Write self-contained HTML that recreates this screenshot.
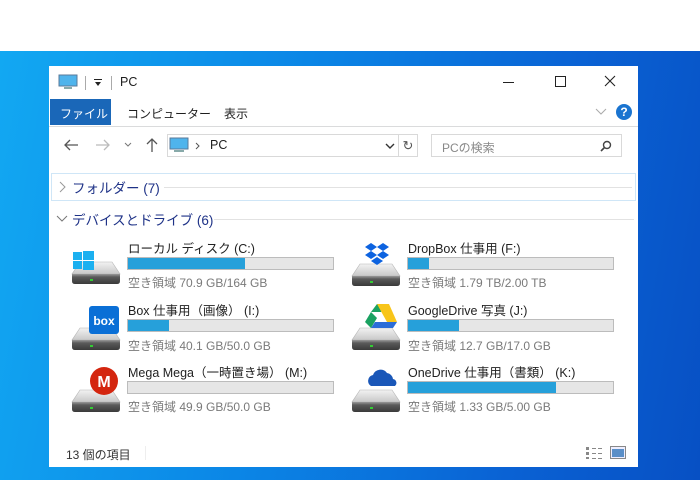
<!DOCTYPE html>
<html><head><meta charset="utf-8"><style>
*{margin:0;padding:0;box-sizing:border-box}
body{width:700px;height:480px;overflow:hidden;position:relative;background:#fff;font-family:"Liberation Sans","Noto Sans CJK JP",sans-serif;font-size:12px;color:#1e1e1e}
.desk{position:absolute;left:0;top:51px;width:700px;height:429px;background:linear-gradient(100deg,#12a8f2 0%,#0b86e6 40%,#0a62d4 75%,#0750c4 100%)}
.win{position:absolute;left:49px;top:66px;width:589px;height:401px;background:#fff}
.a{position:absolute;white-space:nowrap}
.bar{position:absolute;height:13px;width:207px;background:#e6e6e6;border:1px solid #bcbcbc}
.bar i{display:block;height:100%;background:#26a0da}
.nm{font-size:12.5px;color:#222}
.fr{font-size:12px;color:#7a7a7a}
</style></head><body>
<div class="desk"></div>
<div class="win">
 <svg class="a" style="left:9px;top:8px" width="20" height="16"><rect x="1" y="1" width="18" height="11" fill="#4fb4ec" stroke="#5a7a9a"/><rect x="6" y="13" width="8" height="2" fill="#8aa"/></svg>
 <div class="a" style="left:36px;top:10px;width:1px;height:14px;background:#aaa"></div>
 <svg class="a" style="left:44px;top:12px" width="10" height="10"><rect x="1" y="1" width="8" height="1" fill="#222"/><path d="M2 4h6l-3 4z" fill="#222"/></svg>
 <div class="a" style="left:62px;top:10px;width:1px;height:14px;background:#aaa"></div>
 <div class="a" style="left:71px;top:9px;font-size:12.5px">PC</div>
 <div class="a" style="left:454px;top:16px;width:11px;height:1px;background:#222"></div>
 <div class="a" style="left:506px;top:10px;width:11px;height:11px;border:1px solid #222"></div>
 <svg class="a" style="left:555px;top:9px" width="12" height="12"><path d="M1 1L11 11M11 1L1 11" stroke="#222" stroke-width="1.1"/></svg>
 <div class="a" style="left:1px;top:33px;width:61px;height:26px;background:#1a67b8;color:#fff;font-size:12px;padding:6px 0 0 10px">ファイル</div>
 <div class="a" style="left:78px;top:39px;font-size:12px">コンピューター</div>
 <div class="a" style="left:175px;top:39px;font-size:12px">表示</div>
 <svg class="a" style="left:546px;top:42px" width="12" height="8"><path d="M1 1l5 5 5-5" fill="none" stroke="#aaa"/></svg>
 <div class="a" style="left:567px;top:38px;width:16px;height:16px;border-radius:50%;background:#1a74d0;color:#fff;font-weight:bold;font-size:12px;text-align:center;line-height:16px">?</div>
 <div class="a" style="left:0;top:60px;width:589px;height:1px;background:#dadbdc"></div>
 <svg class="a" style="left:14px;top:72px" width="16" height="14"><path d="M15 7H2M7 2L2 7l5 5" fill="none" stroke="#555" stroke-width="1.3"/></svg>
 <svg class="a" style="left:46px;top:72px" width="16" height="14"><path d="M1 7h13M9 2l5 5-5 5" fill="none" stroke="#bbb" stroke-width="1.3"/></svg>
 <svg class="a" style="left:75px;top:76px" width="8" height="6"><path d="M1 1l3 3 3-3" fill="none" stroke="#777"/></svg>
 <svg class="a" style="left:96px;top:71px" width="14" height="16"><path d="M7 15V2M2 7l5-5 5 5" fill="none" stroke="#555" stroke-width="1.3"/></svg>
 <div class="a" style="left:118px;top:68px;width:251px;height:23px;border:1px solid #d9d9d9"></div>
 <svg class="a" style="left:120px;top:71px" width="20" height="17"><rect x="1" y="1" width="18" height="11" fill="#4fb4ec" stroke="#5a7a9a"/><rect x="5" y="13" width="10" height="2" fill="#8aa"/></svg>
 <svg class="a" style="left:146px;top:76px" width="6" height="8"><path d="M1 1l3 3-3 3" fill="none" stroke="#555"/></svg>
 <div class="a" style="left:161px;top:72px;font-size:12.5px">PC</div>
 <svg class="a" style="left:336px;top:77px" width="10" height="7"><path d="M1 1l4 4 4-4" fill="none" stroke="#333" stroke-width="1.4"/></svg>
 <div class="a" style="left:349px;top:68px;width:20px;height:23px;border:1px solid #d9d9d9;text-align:center;font-size:13px;color:#555;line-height:21px">&#8635;</div>
 <div class="a" style="left:382px;top:68px;width:191px;height:23px;border:1px solid #d9d9d9;color:#888;font-size:12px;padding:4px 0 0 10px">PCの検索</div>
 <svg class="a" style="left:551px;top:74px" width="12" height="12"><circle cx="7" cy="5" r="3.5" fill="none" stroke="#444" stroke-width="1.4"/><path d="M4.5 7.5L1 11" stroke="#444" stroke-width="1.6"/></svg>
 <div class="a" style="left:2px;top:107px;width:585px;height:28px;border:1px solid #cfe6f7"></div>
 <svg class="a" style="left:10px;top:115px" width="8" height="12"><path d="M1 1l5 5-5 5" fill="none" stroke="#999"/></svg>
 <div class="a" style="left:23px;top:111px;font-size:13.5px;color:#1e3287">フォルダー (7)</div>
 <div class="a" style="left:115px;top:121px;width:468px;height:1px;background:#e2e2e2"></div>
 <svg class="a" style="left:7px;top:149px" width="12" height="8"><path d="M1 1l5 5 5-5" fill="none" stroke="#777"/></svg>
 <div class="a" style="left:23px;top:143px;font-size:13.5px;color:#1e3287">デバイスとドライブ (6)</div>
 <div class="a" style="left:165px;top:153px;width:420px;height:1px;background:#e2e2e2"></div>

 <svg width="0" height="0" style="position:absolute"><defs>
  <linearGradient id="tp" x1="0" y1="0" x2="0" y2="1"><stop offset="0" stop-color="#f2f2f2"/><stop offset="1" stop-color="#c8c8c8"/></linearGradient>
  <linearGradient id="fr" x1="0" y1="0" x2="0" y2="1"><stop offset="0" stop-color="#9a9a9a"/><stop offset=".3" stop-color="#5a5a5a"/><stop offset="1" stop-color="#3a3a3a"/></linearGradient>
  <g id="drv"><path d="M8 12 L40 12 L48 24 L0 24Z" fill="url(#tp)" stroke="#b5b5b5" stroke-width=".6"/><path d="M0 24h48v7q0 3-3 3H3q-3 0-3-3z" fill="url(#fr)"/><rect x="18" y="29" width="3" height="2" fill="#3c3"/></g>
 </defs></svg>

 <svg class="a" style="left:22px;top:180px" width="50" height="40"><use href="#drv" x="1" y="4"/><g fill="#1bb0f0"><rect x="2" y="6" width="9" height="8"/><rect x="12" y="5" width="11" height="9"/><rect x="2" y="15" width="9" height="8"/><rect x="12" y="15" width="11" height="9"/></g></svg>
 <div class="a nm" style="left:79px;top:172px">ローカル ディスク (C:)</div>
 <div class="bar" style="left:78px;top:191px"><i style="width:57%"></i></div>
 <div class="a fr" style="left:79px;top:208px">空き領域 70.9 GB/164 GB</div>

 <svg class="a" style="left:22px;top:236px" width="50" height="50"><use href="#drv" x="1" y="14"/><rect x="18" y="4" width="30" height="28" rx="3" fill="#0a6fd6"/><text x="33" y="23" fill="#fff" font-family="Liberation Sans" font-weight="bold" font-size="12" text-anchor="middle">box</text></svg>
 <div class="a nm" style="left:79px;top:234px">Box 仕事用（画像） (I:)</div>
 <div class="bar" style="left:78px;top:253px"><i style="width:20%"></i></div>
 <div class="a fr" style="left:79px;top:271px">空き領域 40.1 GB/50.0 GB</div>

 <svg class="a" style="left:22px;top:298px" width="50" height="50"><use href="#drv" x="1" y="14"/><circle cx="33" cy="17" r="14" fill="#d4260f"/><text x="33" y="23" fill="#fff" font-family="Liberation Sans" font-weight="bold" font-size="16" text-anchor="middle">M</text></svg>
 <div class="a nm" style="left:79px;top:296px">Mega Mega（一時置き場） (M:)</div>
 <div class="bar" style="left:78px;top:315px"><i style="width:0"></i></div>
 <div class="a fr" style="left:79px;top:332px">空き領域 49.9 GB/50.0 GB</div>

 <svg class="a" style="left:302px;top:172px" width="50" height="50"><use href="#drv" x="1" y="14"/><g fill="#0d63e0"><path d="M20 5l6 4-6 4-6-4z"/><path d="M32 5l6 4-6 4-6-4z"/><path d="M20 13l6 4-6 4-6-4z"/><path d="M32 13l6 4-6 4-6-4z"/><path d="M26 19l6 4-6 4-6-4z"/></g></svg>
 <div class="a nm" style="left:359px;top:172px">DropBox 仕事用 (F:)</div>
 <div class="bar" style="left:358px;top:191px"><i style="width:10%"></i></div>
 <div class="a fr" style="left:359px;top:208px">空き領域 1.79 TB/2.00 TB</div>

 <svg class="a" style="left:302px;top:236px" width="50" height="50"><use href="#drv" x="1" y="14"/><path d="M20 10l6-8 10 0-6 8z" fill="#1aa261"/><path d="M20 10l-6 10 6 6 6-10z" fill="#1aa261"/><path d="M26 2l12 0 8 18-10 0z" fill="#f8c51a"/><path d="M20 26l4-6 22 0-4 6z" fill="#2c6dd8"/></svg>
 <div class="a nm" style="left:359px;top:234px">GoogleDrive 写真 (J:)</div>
 <div class="bar" style="left:358px;top:253px"><i style="width:25%"></i></div>
 <div class="a fr" style="left:359px;top:271px">空き領域 12.7 GB/17.0 GB</div>

 <svg class="a" style="left:302px;top:298px" width="50" height="50"><use href="#drv" x="1" y="14"/><path d="M20 22a6 6 0 0 1 2-11a8 8 0 0 1 14-2a7 7 0 0 1 6 6a4 4 0 0 1 2 7z" fill="#1a57b8"/></svg>
 <div class="a nm" style="left:359px;top:296px">OneDrive 仕事用（書類） (K:)</div>
 <div class="bar" style="left:358px;top:315px"><i style="width:72%"></i></div>
 <div class="a fr" style="left:359px;top:332px">空き領域 1.33 GB/5.00 GB</div>

 <div class="a" style="left:17px;top:380px;font-size:12px;color:#333">13 個の項目</div>
 <div class="a" style="left:96px;top:380px;width:1px;height:14px;background:#eee"></div>
 <svg class="a" style="left:536px;top:380px" width="18" height="14"><g fill="#888"><rect x="1" y="1" width="3" height="3"/><rect x="1" y="6" width="3" height="3"/><rect x="1" y="11" width="3" height="2"/><rect x="7" y="2" width="4" height="1"/><rect x="13" y="2" width="4" height="1"/><rect x="7" y="7" width="4" height="1"/><rect x="13" y="7" width="4" height="1"/><rect x="7" y="12" width="4" height="1"/><rect x="13" y="12" width="4" height="1"/></g></svg>
 <svg class="a" style="left:561px;top:380px" width="16" height="14"><rect x=".5" y=".5" width="15" height="12" fill="#eef" stroke="#888"/><rect x="2" y="3" width="12" height="8" fill="#5a8fc8"/></svg>
</div>
</body></html>
